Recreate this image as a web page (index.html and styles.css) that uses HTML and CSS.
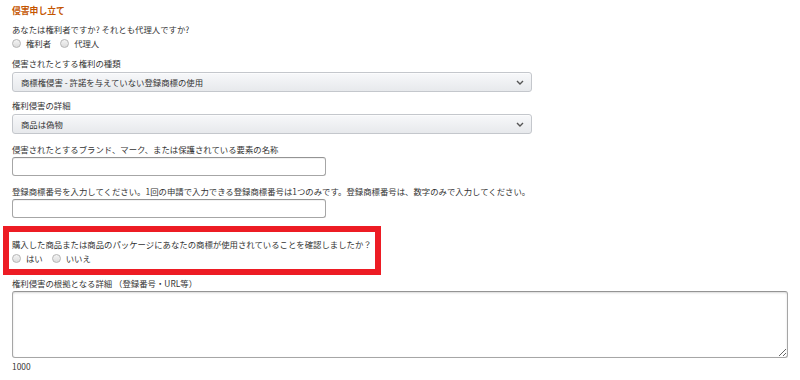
FILE: index.html
```html
<!DOCTYPE html>
<html lang="ja">
<head>
    <meta charset="UTF-8">
    <meta name="viewport" content="width=device-width, initial-scale=1.0">
    <title>侵害申し立て</title>
    <link rel="stylesheet" href="styles.css">
</head>
<body>
<form class="form" action="">
    <h2 class="title">侵害申し立て</h2>

    <p class="question">あなたは権利者ですか? それとも代理人ですか?</p>
    <div class="radios">
        <label class="opt"><input type="radio" name="role"> 権利者</label>
        <label class="opt"><input type="radio" name="role"> 代理人</label>
    </div>

    <p class="label label-first">侵害されたとする権利の種類</p>
    <div class="select-wrap">
        <select class="select">
            <option>商標権侵害 - 許諾を与えていない登録商標の使用</option>
        </select>
        <svg class="chev" width="8" height="5" viewBox="0 0 8 5"><path d="M1 1l3 3 3-3" fill="none" stroke="#555" stroke-width="1.4"/></svg>
    </div>

    <p class="label">権利侵害の詳細</p>
    <div class="select-wrap">
        <select class="select">
            <option>商品は偽物</option>
        </select>
        <svg class="chev" width="8" height="5" viewBox="0 0 8 5"><path d="M1 1l3 3 3-3" fill="none" stroke="#555" stroke-width="1.4"/></svg>
    </div>

    <p class="label label-gap">侵害されたとするブランド、マーク、または保護されている要素の名称</p>
    <input class="text" type="text">

    <p class="label label-gap">登録商標番号を入力してください。1回の申請で入力できる登録商標番号は1つのみです。登録商標番号は、数字のみで入力してください。</p>
    <input class="text" type="text">

    <div class="highlight">
        <p class="question">購入した商品または商品のパッケージにあなたの商標が使用されていることを確認しましたか？</p>
        <div class="radios">
            <label class="opt"><input type="radio" name="seen"> はい</label>
            <label class="opt"><input type="radio" name="seen"> いいえ</label>
        </div>
    </div>

    <p class="label label-tight">権利侵害の根拠となる詳細 （登録番号・URL等）</p>
    <textarea class="area"></textarea>
    <p class="count">1000</p>
</form>
</body>
</html>
```

FILE: styles.css
```css
*{margin:0;padding:0;box-sizing:border-box;}
body{background:#fff;font-family:"Noto Sans CJK JP","Liberation Sans",sans-serif;font-size:8.4px;color:#333;}
.form{display:flex;flex-direction:column;align-items:flex-start;padding:4px 12px 0 12px;}
.title{font-size:8.8px;line-height:14px;font-weight:bold;color:#c45500;}
.question{line-height:14px;margin-top:4px;white-space:nowrap;}
.radios{display:flex;gap:9px;line-height:14px;}
.opt{display:flex;align-items:center;gap:5px;}
.opt input{appearance:none;width:9px;height:9px;border-radius:50%;border:1px solid #b5b5b5;background:linear-gradient(#f4f4f4,#dcdcdc);margin:0;}
.label{line-height:14px;margin-top:6px;margin-bottom:2px;white-space:nowrap;}
.label-gap{margin-top:8px;margin-bottom:1px;}
.label-tight{margin-top:1px;margin-bottom:1px;}
.select-wrap{position:relative;width:520px;}
.select{appearance:none;width:520px;height:20px;border:1px solid #c4c7cc;border-radius:3px;background:linear-gradient(#f7f8fa,#e7e9ec);box-shadow:0 1px 0 rgba(255,255,255,.6) inset;font-family:inherit;font-size:8.4px;color:#333;padding-left:8px;}
.chev{position:absolute;right:8px;top:8px;}
.text{width:314px;height:19px;border:1px solid #a6a6a6;border-top-color:#949494;border-radius:3px;box-shadow:0 1px 0 rgba(0,0,0,.05) inset;}
.highlight{margin:8px 0 0 -9px;width:378px;border:6px solid #ed1c24;padding:5px 0 4px 3px;}
.highlight .question{margin-top:0;}
.area{width:776px;height:67px;border:1px solid #a6a6a6;border-top-color:#949494;border-radius:3px;box-shadow:0 1px 2px rgba(0,0,0,.15) inset;resize:vertical;}
.count{line-height:14px;margin-top:1px;}
```
